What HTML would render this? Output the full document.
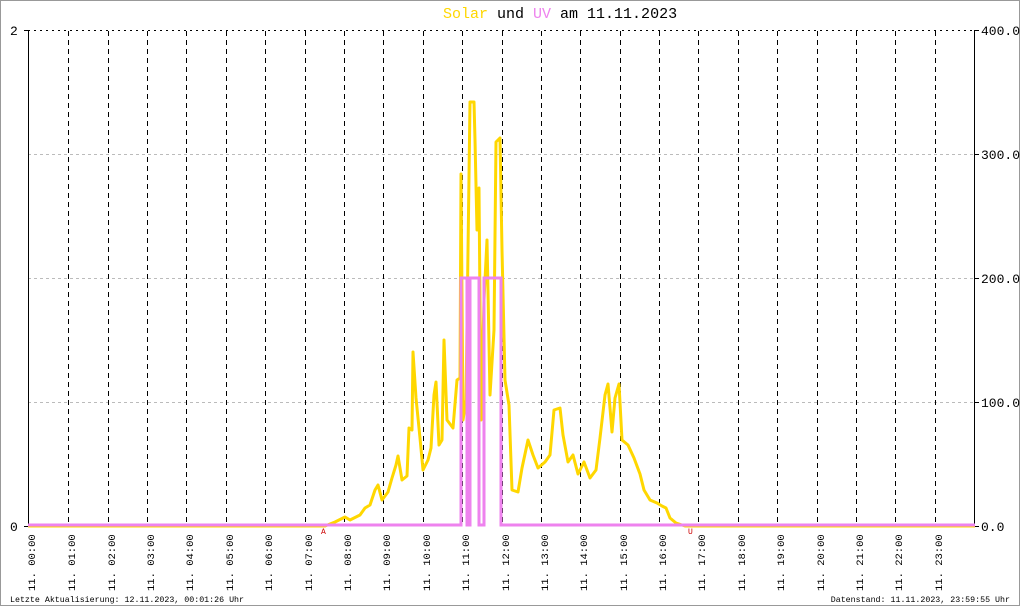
<!DOCTYPE html>
<html><head><meta charset="utf-8"><style>
html,body{margin:0;padding:0;background:#fff}
svg{display:block;font-family:"Liberation Mono",monospace}
</style></head><body>
<svg width="1020" height="606" viewBox="0 0 1020 606" xmlns="http://www.w3.org/2000/svg">
<rect x="0.5" y="0.5" width="1019" height="605" fill="#fff" stroke="#999" stroke-width="1"/>
<text x="443" y="18" font-size="15" fill="#000"><tspan fill="#ffd700">Solar</tspan> und <tspan fill="#ee82ee">UV</tspan> am 11.11.2023</text>
<!-- horizontal grid -->
<g stroke="#bbb" stroke-dasharray="3,3" stroke-width="1">
<line x1="28" y1="154.5" x2="975" y2="154.5"/>
<line x1="28" y1="278.5" x2="975" y2="278.5"/>
<line x1="28" y1="402.5" x2="975" y2="402.5"/>
</g>
<line x1="28" y1="30.5" x2="975" y2="30.5" stroke="#000" stroke-dasharray="2,4"/>
<!-- vertical hour lines -->
<g stroke="#000" stroke-dasharray="5,4" stroke-width="1" id="vl">
<line x1="68.5" y1="31" x2="68.5" y2="526"/><line x1="108.5" y1="31" x2="108.5" y2="526"/><line x1="147.5" y1="31" x2="147.5" y2="526"/><line x1="186.5" y1="31" x2="186.5" y2="526"/><line x1="226.5" y1="31" x2="226.5" y2="526"/><line x1="265.5" y1="31" x2="265.5" y2="526"/><line x1="305.5" y1="31" x2="305.5" y2="526"/><line x1="344.5" y1="31" x2="344.5" y2="526"/><line x1="383.5" y1="31" x2="383.5" y2="526"/><line x1="423.5" y1="31" x2="423.5" y2="526"/><line x1="462.5" y1="31" x2="462.5" y2="526"/><line x1="502.5" y1="31" x2="502.5" y2="526"/><line x1="541.5" y1="31" x2="541.5" y2="526"/><line x1="580.5" y1="31" x2="580.5" y2="526"/><line x1="620.5" y1="31" x2="620.5" y2="526"/><line x1="659.5" y1="31" x2="659.5" y2="526"/><line x1="698.5" y1="31" x2="698.5" y2="526"/><line x1="738.5" y1="31" x2="738.5" y2="526"/><line x1="777.5" y1="31" x2="777.5" y2="526"/><line x1="817.5" y1="31" x2="817.5" y2="526"/><line x1="856.5" y1="31" x2="856.5" y2="526"/><line x1="895.5" y1="31" x2="895.5" y2="526"/><line x1="935.5" y1="31" x2="935.5" y2="526"/>
</g>
<!-- axes -->
<line x1="28.5" y1="30" x2="28.5" y2="527" stroke="#000"/>
<line x1="974.5" y1="30" x2="974.5" y2="527" stroke="#000"/>
<line x1="24" y1="30.5" x2="28" y2="30.5" stroke="#000"/>
<line x1="24" y1="526.5" x2="28" y2="526.5" stroke="#000"/>
<g stroke="#000"><line x1="975" y1="30.5" x2="979" y2="30.5"/><line x1="975" y1="154.5" x2="979" y2="154.5"/><line x1="975" y1="278.5" x2="979" y2="278.5"/><line x1="975" y1="402.5" x2="979" y2="402.5"/><line x1="975" y1="526.5" x2="979" y2="526.5"/></g>
<g font-size="13" fill="#000">
<text x="10" y="35">2</text><text x="10" y="531">0</text>
<text x="981" y="35">400.0</text><text x="981" y="159">300.0</text><text x="981" y="283">200.0</text><text x="981" y="407">100.0</text><text x="981" y="531">0.0</text>
</g>
<!-- solar -->
<polyline fill="none" stroke="#ffd700" stroke-width="3" stroke-linejoin="round" points="28,526 325,526 335,522 345,517 350,520 360,515 365,508 370,505 375,490 378,485 382,500 388,492 392,478 396,465 398,456 402,480 407,476 409,428 412,430 413,352 416,398 420,438 423,470 428,460 431,448 434,395 436,382 439,445 442,440 444,340 447,420 453,428 457,380 460,378 461,174 463,420 466,400 470,102 474,102 475,140 477,230 479,188 481,420 484,300 487,240 490,395 494,330 496,142 500,138 502,250 505,380 509,405 512,490 518,492 522,468 528,440 533,455 538,468 545,462 550,455 554,410 560,408 563,435 568,462 573,455 578,474 584,462 590,478 596,470 600,438 605,395 608,384 612,432 615,398 619,384 622,440 628,445 634,458 640,474 644,490 650,500 657,503 662,506 666,508 670,518 676,523 685,526 975,526"/>
<!-- UV -->
<polyline fill="none" stroke="#ee82ee" stroke-width="3" points="28,525 461,525 461,278 467,278 467,525 470,525 470,278 479,278 479,525 484,525 484,278 501,278 501,525 975,525"/>
<text x="321" y="534" font-size="8" fill="#c00">A</text>
<text x="688" y="534" font-size="8" fill="#c00">U</text>
<!-- x labels -->
<g font-size="10.5" fill="#000" id="xl">
<text transform="translate(35,591) rotate(-90)">11. 00:00</text>
<text transform="translate(75,591) rotate(-90)">11. 01:00</text>
<text transform="translate(115,591) rotate(-90)">11. 02:00</text>
<text transform="translate(154,591) rotate(-90)">11. 03:00</text>
<text transform="translate(193,591) rotate(-90)">11. 04:00</text>
<text transform="translate(233,591) rotate(-90)">11. 05:00</text>
<text transform="translate(272,591) rotate(-90)">11. 06:00</text>
<text transform="translate(312,591) rotate(-90)">11. 07:00</text>
<text transform="translate(351,591) rotate(-90)">11. 08:00</text>
<text transform="translate(390,591) rotate(-90)">11. 09:00</text>
<text transform="translate(430,591) rotate(-90)">11. 10:00</text>
<text transform="translate(469,591) rotate(-90)">11. 11:00</text>
<text transform="translate(509,591) rotate(-90)">11. 12:00</text>
<text transform="translate(548,591) rotate(-90)">11. 13:00</text>
<text transform="translate(587,591) rotate(-90)">11. 14:00</text>
<text transform="translate(627,591) rotate(-90)">11. 15:00</text>
<text transform="translate(666,591) rotate(-90)">11. 16:00</text>
<text transform="translate(705,591) rotate(-90)">11. 17:00</text>
<text transform="translate(745,591) rotate(-90)">11. 18:00</text>
<text transform="translate(784,591) rotate(-90)">11. 19:00</text>
<text transform="translate(824,591) rotate(-90)">11. 20:00</text>
<text transform="translate(863,591) rotate(-90)">11. 21:00</text>
<text transform="translate(902,591) rotate(-90)">11. 22:00</text>
<text transform="translate(942,591) rotate(-90)">11. 23:00</text>
</g>
<text x="10" y="602" font-size="8.3" fill="#000">Letzte Aktualisierung: 12.11.2023, 00:01:26 Uhr</text>
<text x="1010" y="602" font-size="8.3" fill="#000" text-anchor="end">Datenstand: 11.11.2023, 23:59:55 Uhr</text>
</svg>
</body></html>
